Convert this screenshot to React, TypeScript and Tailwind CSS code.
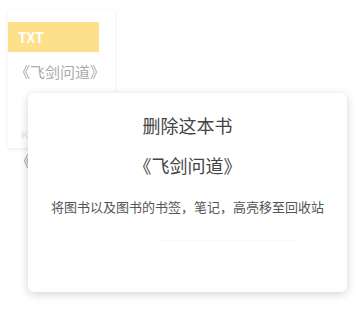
import React from "react";

export default function App() {
  const font = { fontFamily: '"Microsoft YaHei", "Noto Sans CJK SC", "Liberation Sans", sans-serif' };
  return (
    <div className="relative w-[357px] h-[324px] bg-white overflow-hidden" style={font}>
      <div className="pl-[8px] pt-[10px]">
        <div className="w-[107px] h-[138px] bg-white shadow-[0_1px_4px_rgba(0,0,0,0.08)] flex flex-col pt-[12px]">
          <div className="w-[91px] h-[30px] bg-[#fde08a] flex items-center pl-[10px]">
            <span className="text-white font-bold text-[14px] leading-none">TXT</span>
          </div>
          <div className="pl-[7px] pt-[11px] text-[15px] leading-[18px] text-[#aaaaaa] whitespace-nowrap">《飞剑问道》</div>
          <div className="mt-auto pl-[13px] pb-[8px] text-[11px] text-[#e6e6e6] leading-none">K</div>
        </div>
        <div className="pl-[8px] pt-[5px] text-[15px] leading-[16px] text-[#999999] whitespace-nowrap">《飞剑问道》</div>
      </div>

      <div className="absolute left-[28px] top-[93px] w-[319px] h-[199px] bg-white rounded-[6px] shadow-[0_2px_10px_rgba(0,0,0,0.18)] flex flex-col items-center">
        <div className="pt-[21px] text-[18px] leading-[22px] text-[#444444]">删除这本书</div>
        <div className="pt-[18px] text-[18px] leading-[22px] text-[#444444]">《飞剑问道》</div>
        <div className="pt-[23px] text-[13px] leading-[16px] text-[#555555] whitespace-nowrap">将图书以及图书的书签，笔记，高亮移至回收站</div>
        <div className="mt-[25px] ml-[80px] w-[136px] h-px bg-[#fafafa]"></div>
      </div>
    </div>
  );
}
